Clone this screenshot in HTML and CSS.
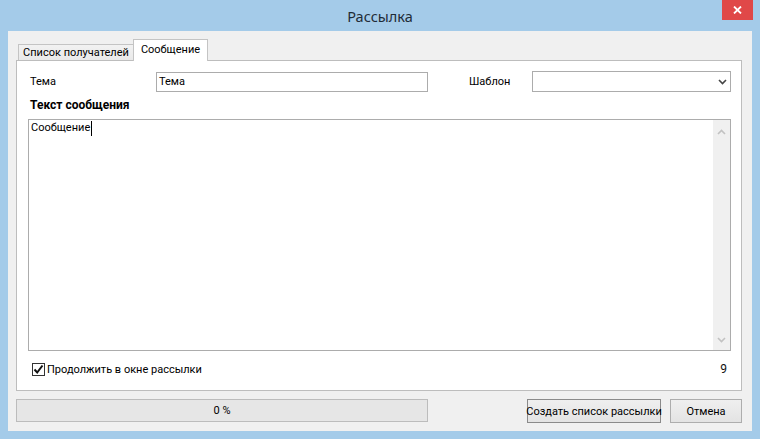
FILE: index.html
```html
<!DOCTYPE html>
<html lang="ru">
<head>
<meta charset="utf-8">
<title>Рассылка</title>
<link rel="stylesheet" href="styles.css">
</head>
<body>
<div class="window">
  <div class="titlebar">
    <span class="title">Рассылка</span>
    <div class="close">
      <svg width="9" height="8" viewBox="0 0 9 8"><path d="M1 0.5 L8 7.5 M8 0.5 L1 7.5" stroke="#fff" stroke-width="1.8"/></svg>
    </div>
  </div>
  <div class="client">
    <div class="tabs">
      <div class="tab tab-recipients">Список получателей</div>
      <div class="tab active">Сообщение</div>
    </div>
    <div class="panel">
      <div class="row1">
        <span class="lbl lbl-theme">Тема</span>
        <div class="input">Тема</div>
        <span class="lbl lbl-tpl">Шаблон</span>
        <div class="select">
          <svg width="9" height="6" viewBox="0 0 9 6"><path d="M1 1 L4.5 4.5 L8 1" stroke="#444" stroke-width="1.6" fill="none"/></svg>
        </div>
      </div>
      <div class="section-label">Текст сообщения</div>
      <div class="memo">
        <div class="memo-text">Сообщение<span class="caret"></span></div>
        <div class="vscroll">
          <svg width="9" height="6" viewBox="0 0 9 6"><path d="M1 5 L4.5 1.5 L8 5" stroke="#c2c2c2" stroke-width="1.6" fill="none"/></svg>
          <svg width="9" height="6" viewBox="0 0 9 6"><path d="M1 1 L4.5 4.5 L8 1" stroke="#c2c2c2" stroke-width="1.6" fill="none"/></svg>
        </div>
      </div>
      <div class="check-row">
        <label class="check">
          <span class="box"><svg width="11" height="11" viewBox="0 0 11 11"><path d="M1.5 5.5 L4.2 8.5 L9.5 1.5" stroke="#111" stroke-width="2" fill="none"/></svg></span>
          Продолжить в окне рассылки
        </label>
        <span class="count">9</span>
      </div>
    </div>
    <div class="bottom">
      <div class="progress">0 %</div>
      <div class="spacer"></div>
      <div class="btn btn-default">Создать список рассылки</div>
      <div class="btn btn-cancel">Отмена</div>
    </div>
  </div>
</div>
</body>
</html>
```
FILE: styles.css
```css
* { box-sizing: border-box; }
html, body { margin: 0; padding: 0; }
body {
  background: #a4cbe9;
  font-family: Roboto, "Noto Sans", sans-serif;
  font-size: 11px;
  color: #000;
}
.window {
  width: 760px;
  height: 439px;
  background: #a4cbe9;
  display: flex;
  flex-direction: column;
}
.titlebar {
  position: relative;
  height: 31px;
  display: flex;
  align-items: center;
  justify-content: center;
}
.title {
  font-family: "Noto Sans", sans-serif;
  font-size: 14.5px;
  color: #1f2b37;
  padding-top: 1px;
}
.close {
  position: absolute;
  top: 0;
  left: 722px;
  width: 31px;
  height: 20px;
  background: #e04848;
  display: flex;
  align-items: center;
  justify-content: center;
}
.client {
  margin: 0 8px;
  height: 400px;
  background: #f0f0f0;
  padding: 8px 10px 9px 8px;
  display: flex;
  flex-direction: column;
}
.tabs {
  display: flex;
  align-items: flex-end;
  height: 22px;
  margin-bottom: -1px;
  padding-left: 2px;
  position: relative;
  z-index: 1;
}
.tab {
  height: 16px;
  margin-bottom: 1px;
  border: 1px solid #c4c4c4;
  border-bottom: none;
  border-right: none;
  background: linear-gradient(#f2f2f2, #e9e9e9);
  line-height: 16px;
  white-space: nowrap;
  text-align: center;
}
.tab-recipients { width: 115px; }
.tab.active {
  width: 75px;
  height: 22px;
  margin-bottom: 0;
  background: #fff;
  border-right: 1px solid #c4c4c4;
  line-height: 20px;
}
.panel {
  height: 331px;
  border: 1px solid #bdbdbd;
  background: #fff;
  padding: 10px 10px 0 11px;
  display: flex;
  flex-direction: column;
}
.row1 {
  display: flex;
  align-items: center;
  height: 21px;
}
.lbl { padding-left: 2px; white-space: nowrap; }
.lbl-theme { width: 128px; }
.input {
  width: 272px;
  height: 20px;
  margin-top: 1px;
  border: 1px solid #acacac;
  padding-left: 2px;
  line-height: 18px;
}
.lbl-tpl { margin-left: 41px; width: 63px; padding-left: 0; }
.select {
  flex: 1;
  height: 21px;
  border: 1px solid #acacac;
  display: flex;
  align-items: center;
  justify-content: flex-end;
  padding-right: 3px;
}
.section-label {
  margin-top: 5px;
  height: 16px;
  line-height: 16px;
  font-size: 12px;
  font-weight: bold;
  padding-left: 2px;
}
.memo {
  margin-top: 6px;
  height: 232px;
  border: 1px solid #acacac;
  display: flex;
}
.memo-text {
  flex: 1;
  padding-left: 2px;
  line-height: 16px;
  display: flex;
  align-items: flex-start;
}
.caret {
  display: inline-block;
  width: 1px;
  height: 15px;
  background: #000;
  margin-top: 1px;
  margin-left: 1px;
}
.vscroll {
  width: 17px;
  background: #f0f0f0;
  display: flex;
  flex-direction: column;
  justify-content: space-between;
  align-items: center;
  padding: 9px 0 7px;
}
.check-row {
  margin-top: 11px;
  height: 14px;
  display: flex;
  align-items: center;
  justify-content: space-between;
  padding: 0 4px 0 4px;
}
.check {
  display: flex;
  align-items: center;
  white-space: nowrap;
}
.box {
  width: 13px;
  height: 13px;
  border: 1px solid #333;
  background: #fff;
  margin-right: 2px;
  display: flex;
  align-items: center;
  justify-content: center;
}
.count { color: #111; font-size: 12px; }
.bottom {
  margin-top: 8px;
  height: 23px;
  display: flex;
  align-items: stretch;
}
.progress {
  width: 412px;
  border: 1px solid #bcbcbc;
  background: #e6e6e6;
  display: flex;
  align-items: center;
  justify-content: center;
}
.spacer { flex: 1; }
.btn {
  height: 24px;
  border: 1px solid #adadad;
  background: linear-gradient(#efefef, #e3e3e3);
  display: flex;
  align-items: center;
  justify-content: center;
  white-space: nowrap;
}
.btn-default { width: 134px; border-color: #8a8a8a; }
.btn-cancel { width: 72px; margin-left: 9px; }
```
